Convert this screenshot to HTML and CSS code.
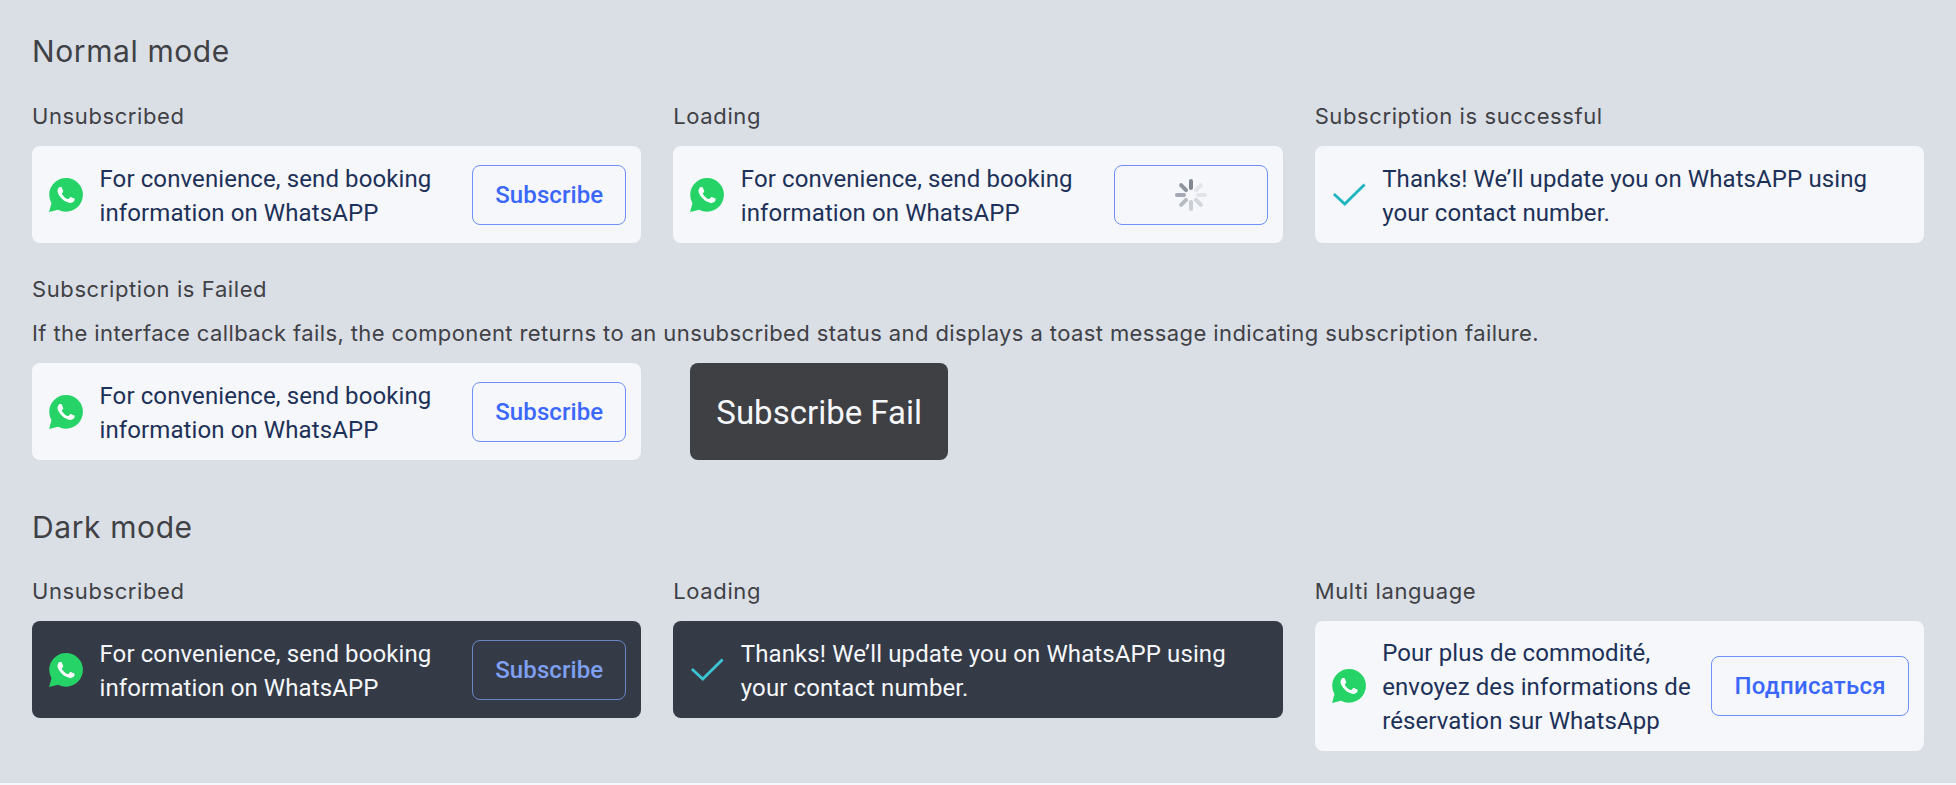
FILE: index.html
```html
<!DOCTYPE html>
<html lang="en">
<head>
  <meta charset="UTF-8">
  <meta name="viewport" content="width=device-width, initial-scale=1.0">
  <title>Subscribe card</title>
  <link rel="stylesheet" href="styles.css">
</head>
<body>
  <svg class="defs" width="0" height="0" aria-hidden="true">
    <symbol id="whatsapp" viewBox="0 0 24 24">
      <path fill="#25d366" d="M.057 24l1.688-6.163A11.867 11.867 0 01.157 11.892C.16 5.335 5.495 0 12.05 0a11.82 11.82 0 018.413 3.488 11.824 11.824 0 013.48 8.414c-.003 6.557-5.338 11.892-11.893 11.892a11.9 11.9 0 01-5.688-1.448L.057 24z"/>
      <path fill="#fff" d="M17.472 14.382c-.297-.149-1.758-.867-2.03-.967-.273-.099-.471-.148-.67.15-.197.297-.767.966-.94 1.164-.173.199-.347.223-.644.075-.297-.15-1.255-.463-2.39-1.475-.883-.788-1.48-1.761-1.653-2.059-.173-.297-.018-.458.13-.606.134-.133.298-.347.446-.52.149-.174.198-.298.298-.497.099-.198.05-.371-.025-.52-.075-.149-.669-1.612-.916-2.207-.242-.579-.487-.5-.669-.51-.173-.008-.371-.01-.57-.01-.198 0-.52.074-.792.372-.272.297-1.04 1.016-1.04 2.479 0 1.462 1.065 2.875 1.213 3.074.149.198 2.096 3.2 5.077 4.487.709.306 1.262.489 1.694.625.712.227 1.36.195 1.871.118.571-.085 1.758-.719 2.006-1.413.248-.694.248-1.289.173-1.413-.074-.124-.272-.198-.57-.347z"/>
    </symbol>
    <symbol id="check" viewBox="0 0 36 36">
      <path d="M2 17 L13.5 27.5 L34.5 7" fill="none" stroke="currentColor" stroke-width="3"/>
    </symbol>
  </svg>

  <main class="desk">
    <h2 class="mode">Normal mode</h2>
    <div class="row">
      <section>
        <h3 class="state">Unsubscribed</h3>
        <div class="card">
          <svg class="icon"><use href="#whatsapp"/></svg>
          <p class="msg">For convenience, send booking information on WhatsAPP</p>
          <button class="sub">Subscribe</button>
        </div>
      </section>
      <section>
        <h3 class="state">Loading</h3>
        <div class="card">
          <svg class="icon"><use href="#whatsapp"/></svg>
          <p class="msg">For convenience, send booking information on WhatsAPP</p>
          <button class="sub sub-loading">
            <svg class="spinner" viewBox="0 0 32 32">
              <g stroke="#6d7480" stroke-width="4" stroke-linecap="round">
                <line x1="16" y1="2" x2="16" y2="9" opacity="0.85"/>
                <line x1="16" y1="2" x2="16" y2="9" opacity="0.12" transform="rotate(45 16 16)"/>
                <line x1="16" y1="2" x2="16" y2="9" opacity="0.15" transform="rotate(90 16 16)"/>
                <line x1="16" y1="2" x2="16" y2="9" opacity="0.25" transform="rotate(135 16 16)"/>
                <line x1="16" y1="2" x2="16" y2="9" opacity="0.3" transform="rotate(180 16 16)"/>
                <line x1="16" y1="2" x2="16" y2="9" opacity="0.45" transform="rotate(225 16 16)"/>
                <line x1="16" y1="2" x2="16" y2="9" opacity="0.6" transform="rotate(270 16 16)"/>
                <line x1="16" y1="2" x2="16" y2="9" opacity="0.75" transform="rotate(315 16 16)"/>
              </g>
            </svg>
          </button>
        </div>
      </section>
      <section>
        <h3 class="state">Subscription is successful</h3>
        <div class="card">
          <svg class="icon tick"><use href="#check"/></svg>
          <p class="msg">Thanks! We’ll update you on WhatsAPP using your contact number.</p>
        </div>
      </section>
    </div>

    <section class="failed">
      <h3 class="state">Subscription is Failed</h3>
      <p class="note">If the interface callback fails, the component returns to an unsubscribed status and displays a toast message indicating subscription failure.</p>
      <div class="failed-row">
        <div class="card card-fixed">
          <svg class="icon"><use href="#whatsapp"/></svg>
          <p class="msg">For convenience, send booking information on WhatsAPP</p>
          <button class="sub">Subscribe</button>
        </div>
        <div class="toast">Subscribe Fail</div>
      </div>
    </section>

    <h2 class="mode mode-dark">Dark mode</h2>
    <div class="row">
      <section>
        <h3 class="state">Unsubscribed</h3>
        <div class="card dark">
          <svg class="icon"><use href="#whatsapp"/></svg>
          <p class="msg">For convenience, send booking information on WhatsAPP</p>
          <button class="sub">Subscribe</button>
        </div>
      </section>
      <section>
        <h3 class="state">Loading</h3>
        <div class="card dark">
          <svg class="icon tick"><use href="#check"/></svg>
          <p class="msg">Thanks! We’ll update you on WhatsAPP using your contact number.</p>
        </div>
      </section>
      <section>
        <h3 class="state">Multi language</h3>
        <div class="card">
          <svg class="icon"><use href="#whatsapp"/></svg>
          <p class="msg">Pour plus de commodité, envoyez des informations de réservation sur WhatsApp</p>
          <button class="sub sub-wide">Подписаться</button>
        </div>
      </section>
    </div>
  </main>
</body>
</html>
```

FILE: styles.css
```css
* {
  box-sizing: border-box;
  margin: 0;
  padding: 0;
}

html {
  background-color: #f5f7fb;
}

body {
  font-family: Inter, "Liberation Sans", sans-serif;
  color: #404145;
}

.defs {
  position: absolute;
}

.desk {
  height: 783px;
  padding: 32px;
  background-color: #dadee5;
}

.mode {
  font-size: 30px;
  font-weight: 400;
  letter-spacing: 0.6px;
  line-height: 38px;
  margin-bottom: 32px;
}

.mode-dark {
  margin-top: 48px;
  margin-bottom: 31px;
}

.row {
  display: grid;
  grid-template-columns: repeat(3, 1fr);
  gap: 32px;
  align-items: start;
}

.state {
  font-size: 22px;
  font-weight: 400;
  letter-spacing: 0.6px;
  line-height: 28px;
  margin-bottom: 16px;
}

.card {
  display: flex;
  align-items: center;
  gap: 15.5px;
  min-height: 97px;
  padding: 14px 15px 14px 16px;
  border-radius: 8px;
  background-color: #f5f7fb;
  color: #1d3158;
  font-family: Roboto, sans-serif;
}

.card-fixed {
  width: 609.33px;
}

.icon {
  flex: none;
  width: 36px;
  height: 34px;
}

.tick {
  color: #1fb5c0;
}

.msg {
  flex: 1;
  font-size: 24px;
  letter-spacing: 0.1px;
  line-height: 34px;
  padding-top: 1px;
  margin-bottom: -1px;
}

.sub {
  flex: none;
  display: flex;
  align-items: center;
  justify-content: center;
  height: 60px;
  min-width: 153.5px;
  padding: 0 22px;
  border: 1px solid #6e90f8;
  border-radius: 8px;
  background: none;
  color: #3b68fa;
  font-family: Roboto, sans-serif;
  font-size: 24px;
  font-weight: 500;
  letter-spacing: 0.1px;
}

.sub-wide {
  letter-spacing: 0.3px;
}

.spinner {
  width: 32px;
  height: 32px;
}

.dark {
  background-color: #343a46;
  color: #f5f7fb;
}

.dark .tick {
  color: #3cc4d2;
}

.dark .sub {
  border-color: #6a86c4;
  color: #7f9ff0;
}

.failed {
  margin-top: 32px;
}

.failed .state {
  margin-bottom: 16px;
}

.note {
  font-size: 22px;
  letter-spacing: 0.4px;
  line-height: 28px;
  margin-bottom: 16px;
}

.failed-row {
  display: flex;
  align-items: stretch;
  gap: 49px;
}

.toast {
  display: flex;
  align-items: center;
  padding: 2px 26px 0;
  border-radius: 8px;
  background-color: #3f4044;
  color: #f5f7fb;
  font-family: Roboto, sans-serif;
  font-size: 33px;
}
```
